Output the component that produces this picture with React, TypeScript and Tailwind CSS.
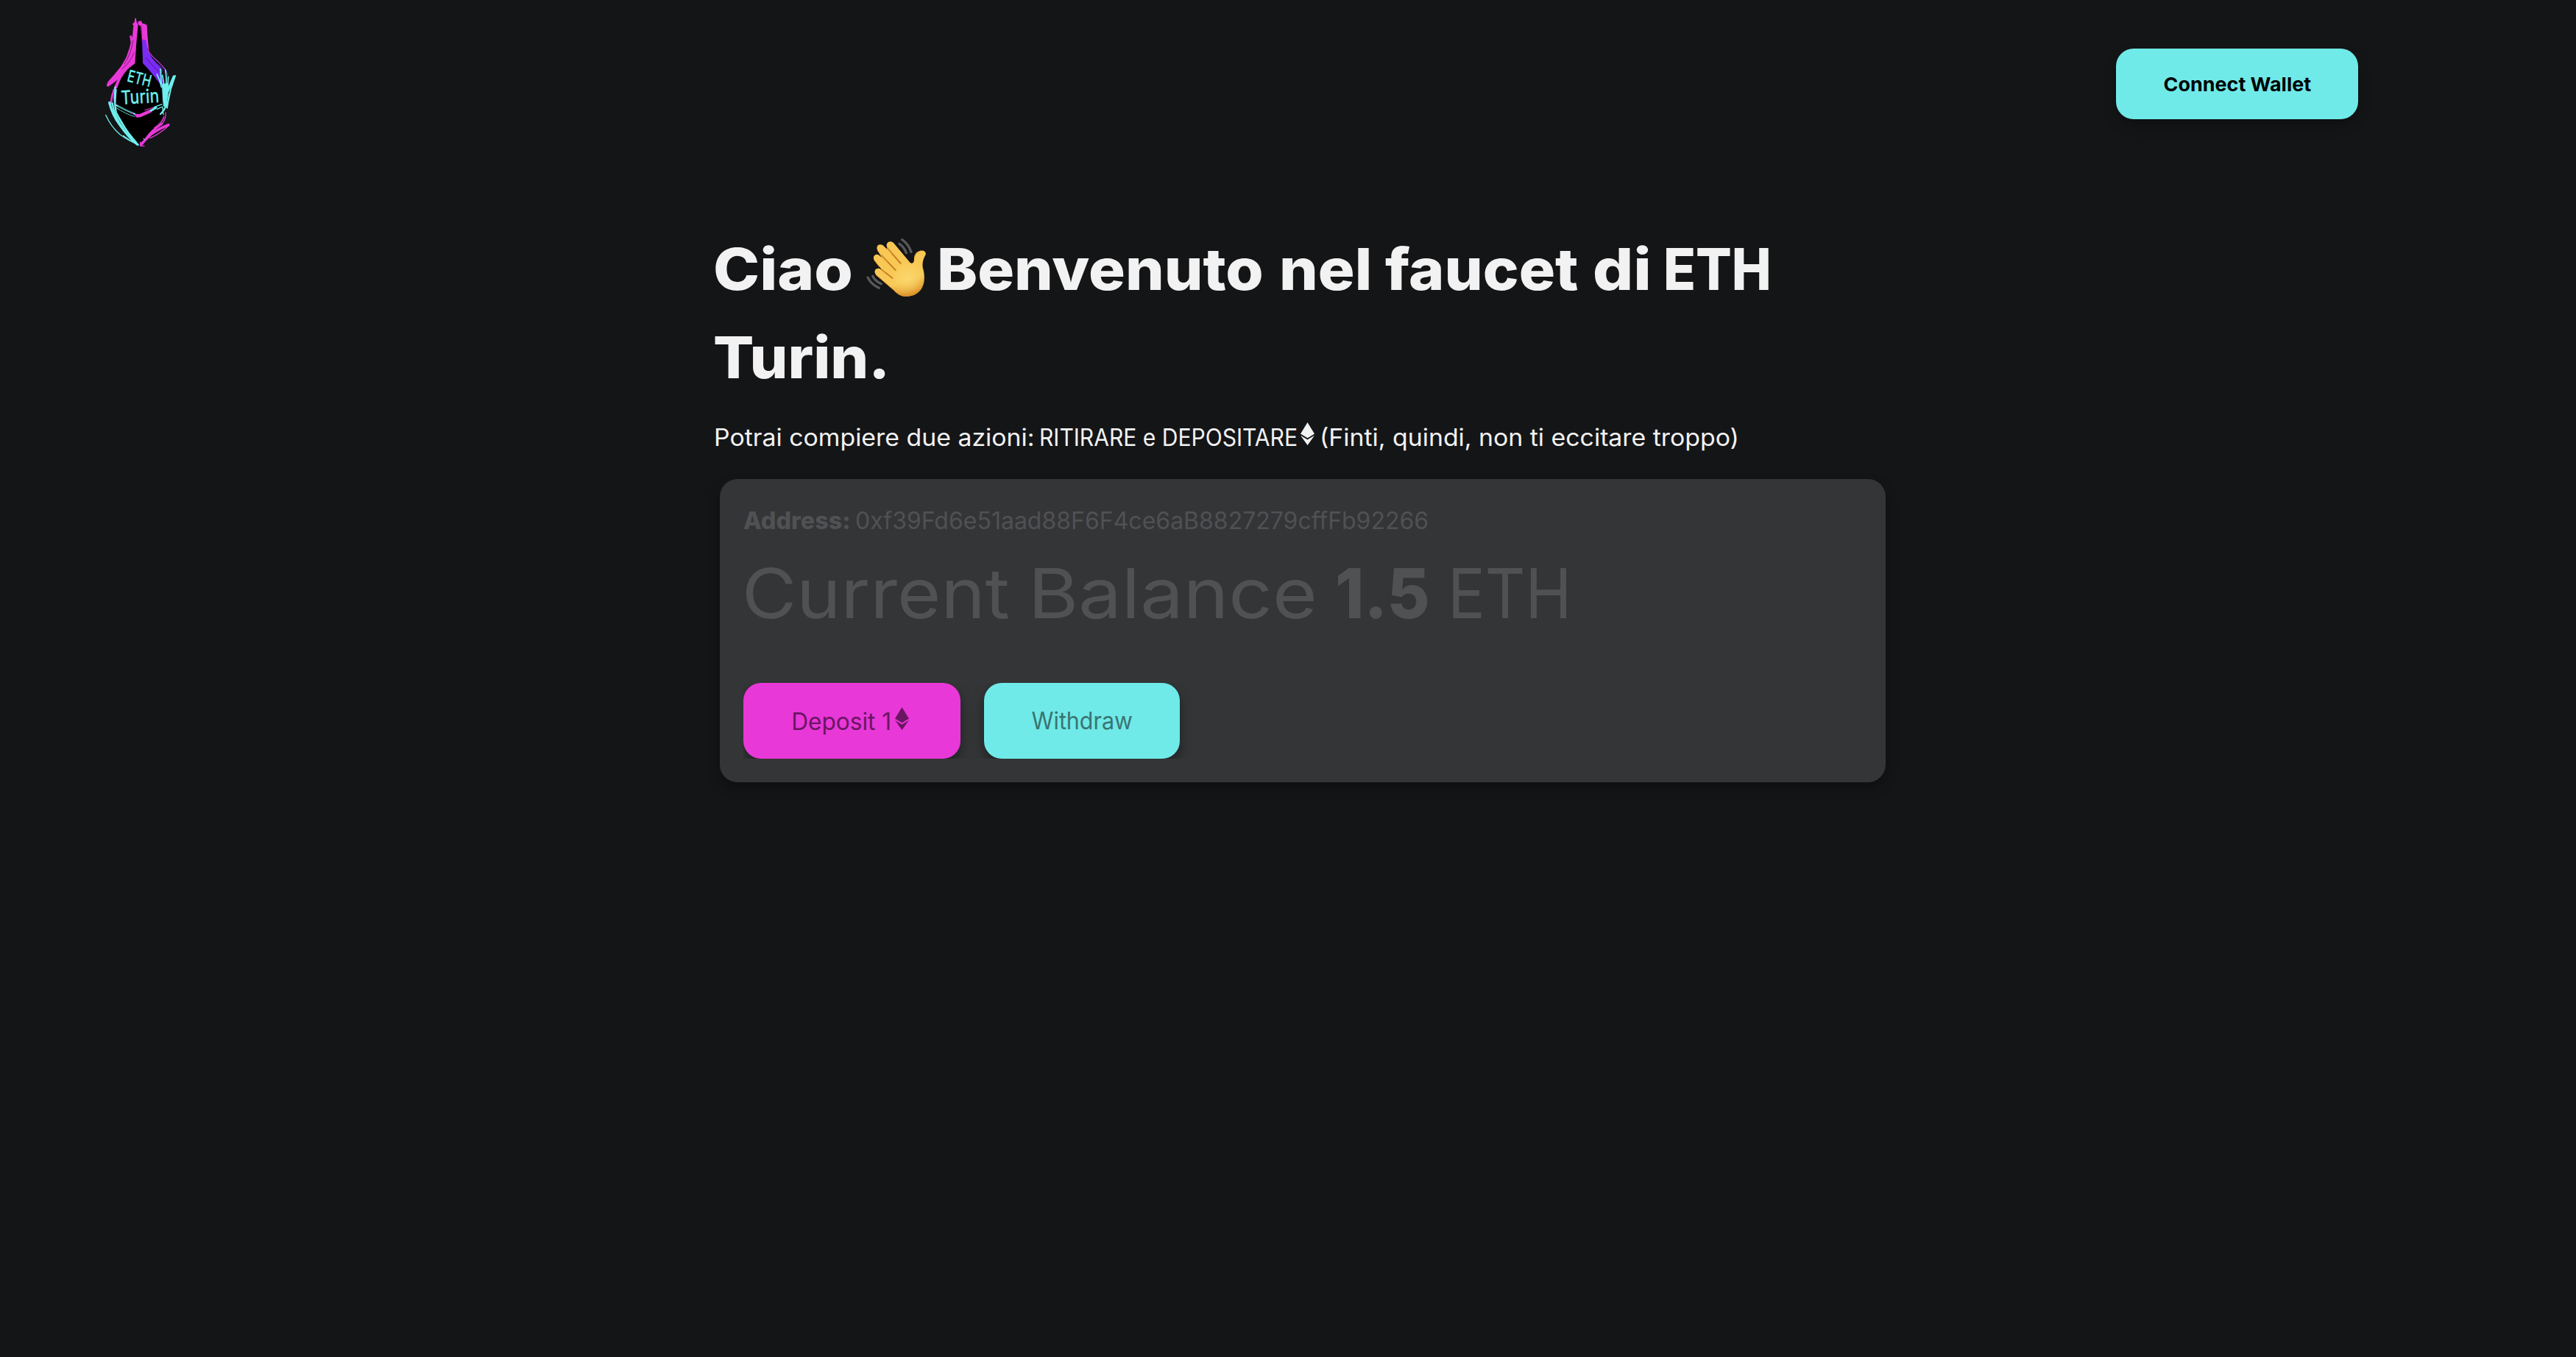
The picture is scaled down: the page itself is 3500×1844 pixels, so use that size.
import React from "react";

function EthTurinLogo() {
  return (
    <svg viewBox="0 0 375 585" className="h-[195px] w-[125px]" fill="none" strokeLinecap="round" strokeLinejoin="round">
      {/* dark body */}
      <path fill="#000" d="M168 50 L186 52 L192 210 L230 250 L266 295 L272 380 L282 420 L250 460 L180 540 L130 500 L82 420 L76 350 L96 290 L125 250 L158 215 Z" />
      {/* left neck, magenta */}
      <path fill="#e938d8" d="M149 54 L158 45 L160 30 L164 28 L167 44 L173 56 L166 130 L160 214 L138 230 L112 252 L96 274 L82 286 L64 299 L50 309 L44 303 L50 288 L76 259 L103 226 L124 190 L138 150 L143 128 L138 102 L146 98 L149 110 L154 58 Z" />
      <g stroke="#e938d8">
        <path strokeWidth="8" d="M108 250 Q84 296 76 322 Q62 350 64 378" />
        <path strokeWidth="5" d="M126 238 Q98 268 86 312" />
        <path strokeWidth="7" d="M77 364 L79 384" />
        <path strokeWidth="3" d="M70 322 L74 360" />
      </g>
      <path stroke="#000" strokeWidth="1.4" d="M152 120 Q144 178 116 216 M156 170 Q142 208 108 236" />
      {/* right neck, magenta into violet */}
      <path fill="#e938d8" d="M172 43 L186 40 L190 50 L202 53 L209 58 L211 96 L217 166 L206 140 L188 124 L183 62 L173 55 Z" />
      <path fill="#7a2cf5" d="M188 124 L194 114 L205 120 L212 160 L230 192 L254 220 L272 240 L268 258 L277 304 L262 296 L240 268 L214 236 L192 212 Z" />
      <path stroke="#7a2cf5" strokeWidth="3" d="M214 166 Q246 204 272 224 Q290 240 294 262 M220 190 Q250 220 280 236 M274 330 L280 360" />
      <path stroke="#e938d8" strokeWidth="3" d="M212 160 Q230 188 262 212 M262 214 Q278 226 286 242" />
      <path stroke="#000" strokeWidth="1.4" d="M186 60 L191 200 M204 190 Q232 224 258 248" />
      {/* right scribble, cyan */}
      <g stroke="#6ff0ee">
        <path strokeWidth="10" d="M319 267 L292 330 L280 384" />
        <path strokeWidth="6" d="M324 264 L306 318 L290 392" />
        <path strokeWidth="14" d="M277 302 L281 372 M289 300 L285 380" />
        <path strokeWidth="5" d="M264 236 L268 300 M284 240 Q292 280 284 330 M250 258 Q262 280 268 310 M296 268 L292 340 M272 262 L280 310" />
        <path strokeWidth="7" d="M290 376 Q282 404 264 420" />
        <path strokeWidth="4" d="M298 340 L292 396 M272 392 L276 422" />
      </g>
      {/* centre band */}
      <path stroke="#6ff0ee" strokeWidth="6" d="M84 384 L124 404 L160 420" />
      <path stroke="#000" strokeWidth="1.6" d="M92 388 L152 415" />
      <path stroke="#6ff0ee" strokeWidth="2.5" d="M80 392 Q122 420 158 430" />
      <path stroke="#e938d8" strokeWidth="13" d="M168 426 L180 427 L222 408" />
      <path stroke="#e938d8" strokeWidth="3" d="M148 414 L170 434 M200 404 L240 392" />
      <path stroke="#6ff0ee" strokeWidth="9" d="M226 406 L246 394" />
      <path stroke="#6ff0ee" strokeWidth="4" d="M238 392 L270 380 M250 400 L272 390" />
      {/* lower left, cyan */}
      <g stroke="#6ff0ee">
        <path strokeWidth="10" d="M56 373 Q68 424 100 466 Q132 512 170 544" />
        <path strokeWidth="7" d="M80 310 Q75 368 83 412 Q104 464 164 534" />
        <path strokeWidth="4" d="M41 424 Q62 472 100 504 Q136 530 176 546" />
        <path strokeWidth="7" d="M68 376 Q76 430 112 480 Q140 516 166 540" />
        <path strokeWidth="4" d="M88 420 L128 488 M84 320 L80 372 M112 508 Q140 530 170 542" />
      </g>
      {/* lower right, magenta */}
      <g stroke="#e938d8">
        <path strokeWidth="10" d="M297 464 Q256 480 224 504 L186 542" />
        <path strokeWidth="8" d="M270 460 Q230 484 208 516 L188 544" />
        <path strokeWidth="4" d="M285 414 Q288 446 262 468 L218 500 M278 430 Q274 454 240 476 M296 468 Q262 500 222 518 M182 534 L182 550 L198 550" />
      </g>
      <path stroke="#6ff0ee" strokeWidth="3" d="M194 520 L200 524" />
      {/* wordmark */}
      <g fill="#6ff0ee" stroke="#6ff0ee" strokeWidth="1.5" fontFamily="Inter, sans-serif" fontWeight="400">
        <text transform="translate(125 286) rotate(14) scale(.74 1)" fontSize="66" letterSpacing="1">ETH</text>
        <text transform="translate(104 380) rotate(-3) scale(.84 1)" fontSize="76" letterSpacing="1">Turin</text>
      </g>
    </svg>
  );
}

function WavingHand() {
  return (
    <svg viewBox="0 0 339 330" className="mt-[4px] h-[110px] w-[113px] shrink-0" fill="none" strokeLinecap="round" strokeLinejoin="round">
      <defs>
        <linearGradient id="skin" x1="120" y1="60" x2="200" y2="280" gradientUnits="userSpaceOnUse">
          <stop offset="0" stopColor="#f8c653" />
          <stop offset=".75" stopColor="#f8ca57" />
          <stop offset="1" stopColor="#dc9128" />
        </linearGradient>
        <radialGradient id="palm" cx="220" cy="205" r="72" gradientUnits="userSpaceOnUse">
          <stop offset="0" stopColor="#fbd76d" />
          <stop offset="1" stopColor="#fbd76d" stopOpacity="0" />
        </radialGradient>
      </defs>
      <path stroke="#58585a" strokeWidth="10" d="M197 47 Q222 64 234 97 M186 64 Q205 76 214 101 M57 201 Q72 230 103 244 M77 196 Q89 217 112 227" />
      <path
        fill="url(#skin)"
        d="M136 78 C128 60 147 47 162 60 L228 139 C236 148 246 143 246 128 C245 108 256 94 272 92 C287 89 296 98 293 108 C284 124 279 139 281 160 C290 190 291 221 278 244 C263 270 235 281 207 278 C190 276 178 267 164 254 L92 191 C80 179 86 163 102 164 C109 165 113 170 119 175 L84 131 C75 116 87 102 101 109 L114 120 L97 91 C88 72 104 60 119 70 L136 86 Z"
      />
      <ellipse cx="222" cy="205" rx="62" ry="66" fill="url(#palm)" />
      <path stroke="#d28825" strokeWidth="6" d="M138 82 L191 144 M113 111 L171 172 M113 169 L158 204" />
      <path stroke="#b97220" strokeWidth="3" d="M158 108 L191 143 M139 138 L170 170 M130 182 L157 203" />
      <path stroke="#e09a32" strokeWidth="3" d="M90 190 L164 253 Q184 276 208 277 Q250 279 274 249 M247 122 Q250 101 272 93 M84 131 L104 157 M98 92 L112 112" />
    </svg>
  );
}

function EthIcon({ className }: { className: string }) {
  return (
    <svg viewBox="0 0 19 31" className={className} fill="currentColor">
      <path d="M9.5 0 L19 15.6 L9.5 21.3 L0 15.6 Z" />
      <path d="M0 17.8 L9.5 23.4 L19 17.8 L9.5 31 Z" />
    </svg>
  );
}

const word = "block shrink-0 origin-left whitespace-nowrap";

export default function App() {
  return (
    <div className="min-h-[1844px] bg-[#141517] font-['Inter',sans-serif] text-[#f2f2f2]">
      <header className="flex h-[228px] items-start justify-between pt-[15px] pr-[296px] pl-[130px]">
        <EthTurinLogo />
        <button className="mt-[51px] flex h-24 w-[329px] items-center justify-center rounded-3xl bg-[#6feae8] text-[26px] font-bold text-black shadow-[0_8px_16px_rgba(0,0,0,0.25)]">
          <span className="scale-x-[1.035] whitespace-nowrap">Connect Wallet</span>
        </button>
      </header>

      <main className="mx-auto w-[1560px] pt-[78px]">
        <h1 className="-ml-px text-[78px] leading-[120px] font-extrabold">
          <span className="flex h-[120px]">
            <span className={`${word} w-[191px] scale-x-[1.09]`}>Ciao</span>
            <WavingHand />
            <span className={`${word} w-[465px] scale-x-[1.065]`}>Benvenuto</span>
            <span className={`${word} w-[144px] scale-x-[1.065]`}>nel</span>
            <span className={`${word} w-[282px] scale-x-[1.055]`}>faucet</span>
            <span className={`${word} w-[96px] scale-x-[1.11]`}>di</span>
            <span className={`${word} w-[150px] scale-x-[0.925]`}>ETH</span>
          </span>
          <span className={`${word} w-[240px] scale-x-[1.05]`}>Turin.</span>
        </h1>

        <p className="mt-[25px] flex text-[32px] leading-[48px]">
          <span className={`${word} w-[442px] scale-x-[1.057]`}>Potrai compiere due azioni:</span>
          <span className={`${word} w-[355px] scale-x-[0.939]`}>RITIRARE e DEPOSITARE</span>
          <EthIcon className="mt-[3px] mr-[7px] h-[31px] w-[19px] shrink-0" />
          <span className={`${word} w-[566px] scale-x-[1.057]`}>(Finti, quindi, non ti eccitare troppo)</span>
        </p>

        <section className="mt-8 ml-2 h-[412px] w-[1584px] rounded-3xl bg-[#343537] px-8 pt-[33px] text-[#505153] shadow-[0_8px_16px_rgba(0,0,0,0.3)]">
          <p className="flex text-[32px] leading-[48px]">
            <span className={`${word} w-[152px] scale-x-[1.01] font-extrabold`}>Address:</span>
            <span className={word}>0xf39Fd6e51aad88F6F4ce6aB8827279cffFb92266</span>
          </p>
          <p className="mt-0.5 -ml-0.5 flex text-[94px] leading-[144px]">
            <span className={`${word} w-[389px] scale-x-[1.083]`}>Current</span>
            <span className={`${word} w-[417px] scale-x-[1.11]`}>Balance</span>
            <span className={`${word} w-[153px] scale-x-[0.95] font-extrabold`}>1.5</span>
            <span className={`${word} scale-x-[0.9]`}>ETH</span>
          </p>
          <div className="mt-[50px] flex h-[103px] gap-8 overflow-hidden text-[32px]">
            <button className="flex w-[295px] items-center rounded-3xl bg-[#e938d8] pt-0.5 pl-[62px] text-[#6a1663] shadow-[0_8px_16px_rgba(0,0,0,0.4)]">
              <span className={`${word} w-36 scale-x-[0.988]`}>Deposit 1</span>
              <EthIcon className="mb-[9px] h-[31px] w-[19px]" />
            </button>
            <button className="flex w-[266px] items-center justify-center rounded-3xl bg-[#6feae8] text-[#3a7472] shadow-[0_8px_16px_rgba(0,0,0,0.4)]">
              <span className="scale-x-[0.95] whitespace-nowrap">Withdraw</span>
            </button>
          </div>
        </section>
      </main>
    </div>
  );
}
